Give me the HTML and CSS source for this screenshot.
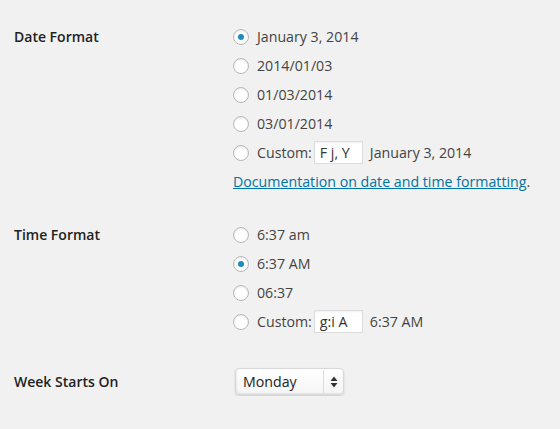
FILE: index.html
```html
<!DOCTYPE html>
<html lang="en">
<head>
  <meta charset="UTF-8" />
  <title>General Settings</title>
  <link rel="stylesheet" href="styles.css">
</head>
<body>
  <div class="form-table">

    <!-- Date format -->
    <div class="field date-field">
      <div class="field-label">Date Format</div>
      <div class="field-options">
        <label class="option"><input type="radio" name="date_format" checked> <span>January 3, 2014</span></label>
        <label class="option"><input type="radio" name="date_format"> <span>2014/01/03</span></label>
        <label class="option"><input type="radio" name="date_format"> <span>01/03/2014</span></label>
        <label class="option"><input type="radio" name="date_format"> <span>03/01/2014</span></label>
        <label class="option">
          <input type="radio" name="date_format"> <span>Custom:</span>
          <input type="text" class="small-text" value="F j, Y">
          <span class="example">January 3, 2014</span>
        </label>
        <p class="doc-line"><a href="#">Documentation on date and time formatting</a>.</p>
      </div>
    </div>

    <!-- Time format -->
    <div class="field time-field">
      <div class="field-label">Time Format</div>
      <div class="field-options">
        <label class="option"><input type="radio" name="time_format"> <span>6:37 am</span></label>
        <label class="option"><input type="radio" name="time_format" checked> <span>6:37 AM</span></label>
        <label class="option"><input type="radio" name="time_format"> <span>06:37</span></label>
        <label class="option">
          <input type="radio" name="time_format"> <span>Custom:</span>
          <input type="text" class="small-text" value="g:i A">
          <span class="example">6:37 AM</span>
        </label>
      </div>
    </div>

    <!-- Week start -->
    <div class="field week-field">
      <div class="field-label">Week Starts On</div>
      <div class="field-options">
        <div class="select-wrap">
          <select name="start_of_week">
            <option>Sunday</option>
            <option selected>Monday</option>
            <option>Tuesday</option>
            <option>Wednesday</option>
            <option>Thursday</option>
            <option>Friday</option>
            <option>Saturday</option>
          </select>
          <span class="select-arrows">
            <svg width="8" height="12" viewBox="0 0 8 12"><path d="M4 0.5 L7.5 5 L0.5 5 Z M4 11.5 L7.5 7 L0.5 7 Z" fill="#333"/></svg>
          </span>
        </div>
      </div>
    </div>

  </div>
</body>
</html>
```

FILE: styles.css
```css
html {
  background: #f1f1f1;
}

body {
  margin: 0;
  font-family: 'Open Sans', sans-serif;
  font-size: 14.2px;
  color: #444;
  background: #f1f1f1;
}

.form-table {
  padding: 22px 0 0 14px;
}

.field {
  display: grid;
  grid-template-columns: 219px 1fr;
}

.date-field {
  margin-bottom: 24px;
}

.time-field {
  margin-bottom: 31px;
}

.field-label {
  font-size: 14px;
  font-weight: 600;
  color: #222;
  line-height: 29px;
}

.option {
  display: flex;
  align-items: center;
  height: 29px;
  white-space: nowrap;
}

/* radio buttons */
input[type="radio"] {
  appearance: none;
  -webkit-appearance: none;
  width: 16px;
  height: 16px;
  margin: 0 7px 0 0;
  border: 1px solid #b4b9be;
  border-radius: 50%;
  background: #fff;
  box-shadow: inset 0 1px 2px rgba(0, 0, 0, 0.1);
  display: inline-flex;
  align-items: center;
  justify-content: center;
  flex: 0 0 auto;
}

input[type="radio"]:checked::before {
  content: "";
  width: 6px;
  height: 6px;
  border-radius: 50%;
  background: #1e8cbe;
}

.option span {
  margin-left: 1px;
}

/* small text inputs */
.small-text {
  width: 49px;
  height: 23px;
  box-sizing: border-box;
  margin: 0 6px 0 2px;
  padding: 2px 5px 3px;
  border: 1px solid #ddd;
  background: #fff;
  box-shadow: inset 0 1px 2px rgba(0, 0, 0, 0.07);
  font-family: 'Open Sans', sans-serif;
  font-size: 14.2px;
  color: #333;
  outline: none;
}

.doc-line {
  margin: 0;
  height: 29px;
  line-height: 29px;
}

.doc-line a {
  color: #0074a2;
  text-decoration: underline;
}

/* select */
.select-wrap {
  position: relative;
  display: inline-block;
  margin: 1px 0 0 2px;
}

.select-wrap select {
  appearance: none;
  -webkit-appearance: none;
  display: block;
  width: 109px;
  height: 27px;
  padding: 0 24px 0 7px;
  border: 1px solid #d8d8d8;
  border-radius: 4px;
  background: linear-gradient(#ffffff, #f5f5f5);
  box-shadow: 0 1px 2px rgba(0, 0, 0, 0.15), inset 1px 0 2px rgba(0, 0, 0, 0.06), inset 0 -1px 2px rgba(0, 0, 0, 0.06);
  font-family: 'Open Sans', sans-serif;
  font-size: 14.2px;
  color: #222;
  outline: none;
}

.select-arrows {
  position: absolute;
  top: 2px;
  right: 1px;
  bottom: 2px;
  width: 19px;
  border-left: 1px solid #dcdcdc;
  display: flex;
  align-items: center;
  justify-content: center;
  pointer-events: none;
}
```
